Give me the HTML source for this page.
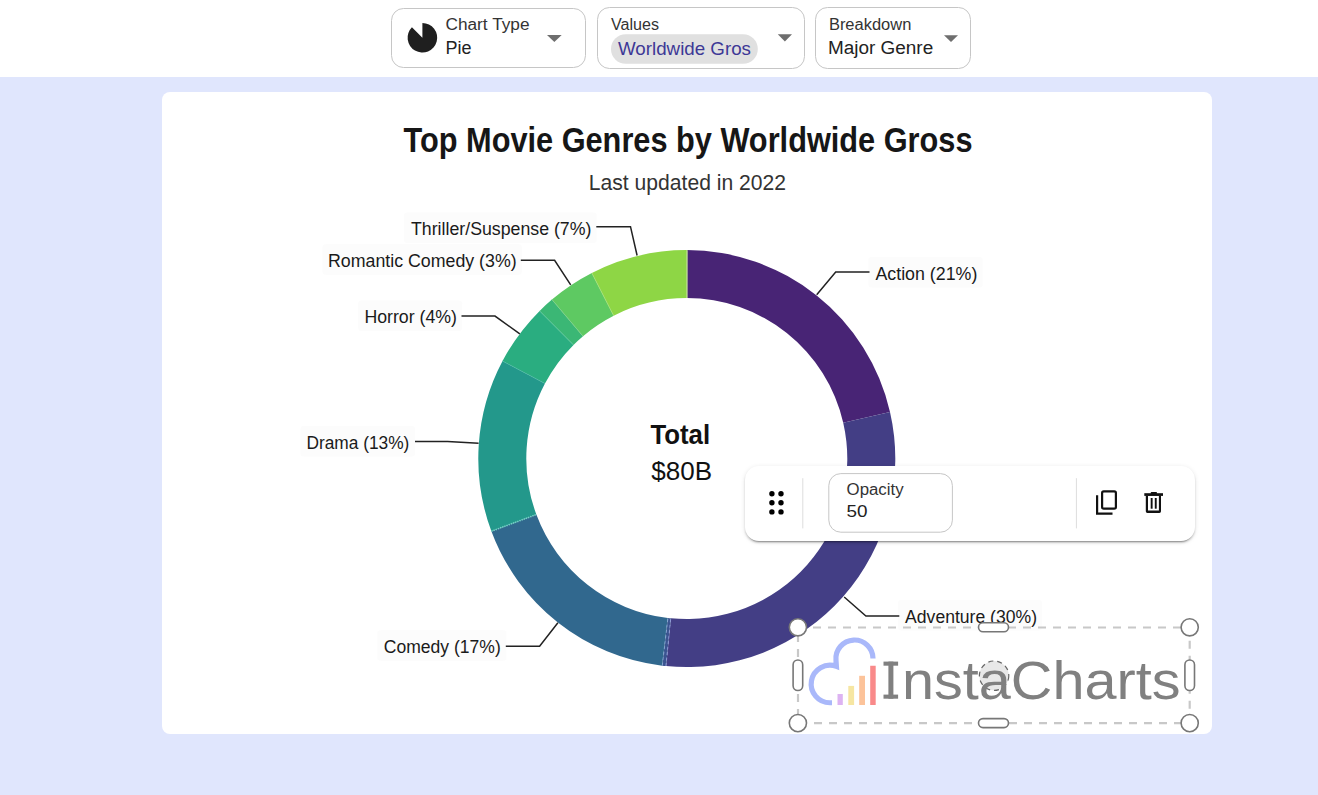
<!DOCTYPE html>
<html><head><meta charset="utf-8">
<style>
html,body{margin:0;padding:0;}
body{width:1318px;height:795px;background:#e0e6fd;position:relative;overflow:hidden;font-family:"Liberation Sans",sans-serif;}
#hdr{position:absolute;left:0;top:0;width:1318px;height:77px;background:#fff;}
#card{position:absolute;left:162px;top:92px;width:1050px;height:642px;background:#fff;border-radius:8px;}
#tb{position:absolute;left:745px;top:466px;width:450px;height:75px;background:#fff;border-radius:14px;box-shadow:0 3px 1px -2px rgba(0,0,0,0.25),0 2px 2px 0 rgba(0,0,0,0.16),0 1px 5px 0 rgba(0,0,0,0.10);}
svg{position:absolute;left:0;top:0;}
</style></head><body>
<div id="hdr"></div>
<div id="card"></div>
<svg id="chart" width="1318" height="795" viewBox="0 0 1318 795">
<g font-family="Liberation Sans, sans-serif">
<!-- header selects -->
<rect x="391.5" y="8.5" width="194" height="59" rx="12" fill="#fff" stroke="#c6c6c6" stroke-width="1"/>
<rect x="597.5" y="7.5" width="207" height="61" rx="12" fill="#fff" stroke="#c6c6c6" stroke-width="1"/>
<rect x="815.5" y="7.5" width="155" height="61" rx="12" fill="#fff" stroke="#c6c6c6" stroke-width="1"/>
<path d="M422.4,37.7 L422.4,22.9 A14.8,14.8 0 1 1 411.93,27.23 Z" fill="#1f1f1f"/>
<text x="445.5" y="29.7" font-size="16" fill="#333" textLength="84" lengthAdjust="spacingAndGlyphs">Chart Type</text>
<text x="445.5" y="54.1" font-size="18" fill="#222" textLength="26" lengthAdjust="spacingAndGlyphs">Pie</text>
<path d="M547,35 L561.7,35 L554.35,42 Z" fill="#6e6e6e"/>
<text x="611" y="29.7" font-size="16" fill="#333" textLength="48" lengthAdjust="spacingAndGlyphs">Values</text>
<rect x="611" y="34.2" width="146.8" height="29.5" rx="14.75" fill="#e0e0e0"/>
<text x="618" y="55" font-size="18.2" fill="#3d3896" textLength="133" lengthAdjust="spacingAndGlyphs">Worldwide Gros</text>
<path d="M777.8,34.2 L792,34.2 L784.9,41.4 Z" fill="#6e6e6e"/>
<text x="828.9" y="29.8" font-size="16" fill="#333" textLength="82.4" lengthAdjust="spacingAndGlyphs">Breakdown</text>
<text x="828" y="54" font-size="18" fill="#222" textLength="105.2" lengthAdjust="spacingAndGlyphs">Major Genre</text>
<path d="M944,35.2 L958,35.2 L951,42.1 Z" fill="#6e6e6e"/>

<!-- titles -->
<text x="403.5" y="151.8" font-size="35" font-weight="bold" fill="#161616" textLength="569" lengthAdjust="spacingAndGlyphs">Top Movie Genres by Worldwide Gross</text>
<text x="588.8" y="190" font-size="21.2" fill="#333" textLength="197.2" lengthAdjust="spacingAndGlyphs">Last updated in 2022</text>

<!-- donut -->
<path d="M686.80,250.10A208.5,208.5 0 0 1 890.00,411.88L843.22,422.63A160.5,160.5 0 0 0 686.80,298.10Z" fill="#482475"/>
<path d="M890.00,411.88A208.5,208.5 0 0 1 666.09,666.07L670.86,618.31A160.5,160.5 0 0 0 843.22,422.63Z" fill="#433e85"/>
<path d="M666.09,666.07A208.5,208.5 0 0 1 662.11,665.63L667.80,617.97A160.5,160.5 0 0 0 670.86,618.31Z" fill="#3b5490"/>
<path d="M662.11,665.63A208.5,208.5 0 0 1 491.38,531.28L536.37,514.55A160.5,160.5 0 0 0 667.80,617.97Z" fill="#31688e"/>
<path d="M491.38,531.28A208.5,208.5 0 0 1 502.53,361.04L544.96,383.50A160.5,160.5 0 0 0 536.37,514.55Z" fill="#23988b"/>
<path d="M502.53,361.04A208.5,208.5 0 0 1 539.63,310.91L573.51,344.91A160.5,160.5 0 0 0 544.96,383.50Z" fill="#2aad80"/>
<path d="M539.63,310.91A208.5,208.5 0 0 1 551.94,299.58L582.99,336.19A160.5,160.5 0 0 0 573.51,344.91Z" fill="#3bb775"/>
<path d="M551.94,299.58A208.5,208.5 0 0 1 591.82,272.99L613.69,315.72A160.5,160.5 0 0 0 582.99,336.19Z" fill="#5ec962"/>
<path d="M591.82,272.99A208.5,208.5 0 0 1 686.80,250.10L686.80,298.10A160.5,160.5 0 0 0 613.69,315.72Z" fill="#8ed645"/>
<line x1="687.16" y1="250.10" x2="687.08" y2="298.10" stroke="#c9e89a" stroke-width="1"/>
<line x1="591.82" y1="272.99" x2="613.69" y2="315.72" stroke="#a6e07a" stroke-width="0.8"/>
<line x1="551.94" y1="299.58" x2="582.99" y2="336.19" stroke="#7fd08a" stroke-width="0.8"/>
<line x1="539.63" y1="310.91" x2="573.51" y2="344.91" stroke="#5cc79a" stroke-width="0.8"/>
<line x1="502.53" y1="361.04" x2="544.96" y2="383.50" stroke="#4cb8a6" stroke-width="0.6"/>
<line x1="491.38" y1="531.28" x2="536.37" y2="514.55" stroke="#72d2c6" stroke-width="1.6" stroke-dasharray="1.3 1"/>
<line x1="665.91" y1="666.05" x2="670.72" y2="618.29" stroke="#9aa6e2" stroke-width="0.8" stroke-dasharray="3 2.5"/>
<line x1="662.29" y1="665.65" x2="667.94" y2="617.99" stroke="#8fb0dc" stroke-width="0.8" stroke-dasharray="3 2.5"/>

<!-- label backgrounds -->
<g fill="#fcfcfc">
<rect x="404.0" y="212.4" width="192.7" height="30.5" rx="3"/>
<rect x="322.5" y="244.3" width="199.3" height="30.5" rx="3"/>
<rect x="358.2" y="300.5" width="103.8" height="30.5" rx="3"/>
<rect x="300.5" y="426.1" width="114.5" height="30.5" rx="3"/>
<rect x="377.4" y="630.2" width="129.0" height="30.5" rx="3"/>
<rect x="868.4" y="257.0" width="114.3" height="30.5" rx="3"/>
<rect x="898.1" y="600.0" width="143.9" height="30.5" rx="3"/>
</g>
<!-- leaders -->
<g fill="none" stroke="#222" stroke-width="1.5">
<polyline points="596.3,226.7 630.5,226.7 637.1,255.5"/>
<polyline points="520.8,260.3 554.6,260.3 570.7,284.9"/>
<polyline points="461.5,316.1 495,316.1 519.8,333.8"/>
<polyline points="415,441.4 447.6,441.4 478.6,443.3"/>
<polyline points="505.8,646.3 539.6,646.3 557.9,622.8"/>
<polyline points="869.5,272 835.7,272 816.7,294.8"/>
<polyline points="899.3,616 865.9,616 844.2,597"/>
</g>
<!-- labels -->
<g font-size="18.7" fill="#1a1a1a">
<text x="411" y="235" textLength="180.4" lengthAdjust="spacingAndGlyphs">Thriller/Suspense (7%)</text>
<text x="328" y="266.9" textLength="188.6" lengthAdjust="spacingAndGlyphs">Romantic Comedy (3%)</text>
<text x="364.4" y="323.1" textLength="92.6" lengthAdjust="spacingAndGlyphs">Horror (4%)</text>
<text x="306.4" y="448.7" textLength="103" lengthAdjust="spacingAndGlyphs">Drama (13%)</text>
<text x="383.8" y="652.8" textLength="117" lengthAdjust="spacingAndGlyphs">Comedy (17%)</text>
<text x="875.4" y="279.6" textLength="102" lengthAdjust="spacingAndGlyphs">Action (21%)</text>
<text x="905.1" y="622.6" textLength="131.9" lengthAdjust="spacingAndGlyphs">Adventure (30%)</text>
</g>
<text x="650.4" y="443.7" font-size="27" font-weight="bold" fill="#111" textLength="59.7" lengthAdjust="spacingAndGlyphs">Total</text>
<text x="651.3" y="479.7" font-size="26.3" fill="#111" textLength="60.8" lengthAdjust="spacingAndGlyphs">$80B</text>
</g>
</svg>
<div id="tb"></div>
<svg id="over" width="1318" height="795" viewBox="0 0 1318 795">
<g font-family="Liberation Sans, sans-serif">
<!-- toolbar contents -->
<g fill="#000">
<circle cx="771.9" cy="493.7" r="2.7"/><circle cx="781" cy="493.7" r="2.7"/>
<circle cx="771.9" cy="502.8" r="2.7"/><circle cx="781" cy="502.8" r="2.7"/>
<circle cx="771.9" cy="511.9" r="2.7"/><circle cx="781" cy="511.9" r="2.7"/>
</g>
<line x1="802.8" y1="478.2" x2="802.8" y2="528.4" stroke="#ddd" stroke-width="1"/>
<line x1="1076.4" y1="478.2" x2="1076.4" y2="528.4" stroke="#ddd" stroke-width="1"/>
<rect x="828.8" y="473.6" width="123.6" height="58.6" rx="12" fill="#fff" stroke="#c6c6c6" stroke-width="1"/>
<text x="846.6" y="494.6" font-size="15.8" fill="#333" textLength="57" lengthAdjust="spacingAndGlyphs">Opacity</text>
<text x="846.6" y="517.4" font-size="17.3" fill="#222" textLength="21" lengthAdjust="spacingAndGlyphs">50</text>
<!-- copy icon -->
<g fill="none" stroke="#111" stroke-width="2.2">
<rect x="1102.1" y="491.3" width="13.8" height="17.4" rx="1.6"/>
<path d="M1097.1,495.3 V513.7 H1112.5"/>
</g>
<!-- trash -->
<g fill="#111">
<rect x="1144.3" y="493.2" width="18.7" height="2.7"/>
<rect x="1150.7" y="492.1" width="6.3" height="2" rx="0.8"/>
<path d="M1145.8,495.6 H1161 V511.3 A1.6,1.6 0 0 1 1159.4,512.9 H1147.4 A1.6,1.6 0 0 1 1145.8,511.3 Z M1148,495.9 V510.5 H1158.9 V495.9 Z" fill-rule="evenodd"/>
<rect x="1150.7" y="498" width="1.9" height="10.7"/>
<rect x="1154.8" y="498" width="1.9" height="10.7"/>
</g>

<!-- logo -->
<g>
<circle cx="994.1" cy="675.7" r="14.7" fill="#e8e8e8" stroke="#666" stroke-width="1.2" stroke-dasharray="5 4"/>
<g fill="#808080">
<rect x="883.5" y="661.6" width="14.6" height="4.1"/>
<rect x="883.5" y="694.6" width="14.6" height="4.1"/>
<rect x="888.4" y="661.6" width="5" height="37.1"/>
</g>
<text id="ist" x="902" y="698.7" font-size="54" fill="#808080" textLength="278.5" lengthAdjust="spacingAndGlyphs">nstaCharts</text>
<path d="M832,702.75 L830,702.75 A18.75,18.75 0 1 1 836.4,666.4 L836,660.5 A18.55,18.55 0 1 1 873,658.55" fill="none" stroke="#a9b8fa" stroke-width="5.2"/>
<rect x="837.5" y="694" width="5.3" height="11" fill="#ddb3f2"/>
<rect x="848.3" y="685.9" width="5.8" height="19.1" fill="#f6e6a2"/>
<rect x="859.2" y="675.8" width="5.8" height="29.2" fill="#fcc39a"/>
<rect x="870.2" y="665.75" width="5.5" height="39.25" fill="#f98a8a"/>
</g>
<!-- selection -->
<rect x="798" y="627.5" width="391.7" height="95.6" fill="none" stroke="#c8c8c8" stroke-width="2.2" stroke-dasharray="8 7"/>
<g fill="#fff" stroke="#777" stroke-width="1.6">
<circle cx="797.9" cy="627.3" r="8.6"/>
<circle cx="1189.7" cy="627.3" r="8.6"/>
<circle cx="797.9" cy="723.1" r="8.6"/>
<circle cx="1189.7" cy="723.1" r="8.6"/>
<rect x="978.5" y="622.8" width="30" height="9" rx="4.5"/>
<rect x="978.5" y="718.6" width="30" height="9" rx="4.5"/>
<rect x="793.1" y="660" width="9.6" height="30.5" rx="4.8"/>
<rect x="1184.9" y="660" width="9.6" height="30.5" rx="4.8"/>
</g>
</g>
</svg>
</body></html>
